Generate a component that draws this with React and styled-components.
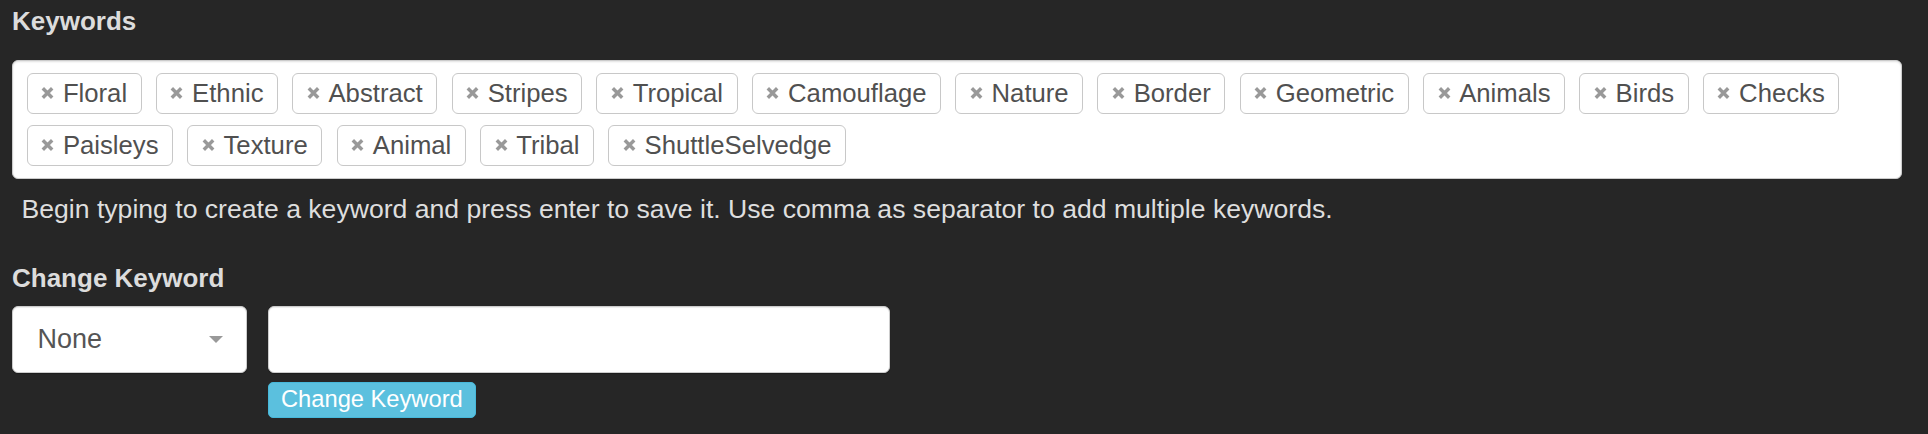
import React, { useState } from 'react';
import styled, { createGlobalStyle } from 'styled-components';

const GlobalStyle = createGlobalStyle`
  html, body {
    margin: 0;
    background: #262626;
  }
  body {
    font-family: "Liberation Sans", Arial, Helvetica, sans-serif;
  }
`;

const initialKeywords = [
  'Floral', 'Ethnic', 'Abstract', 'Stripes', 'Tropical', 'Camouflage',
  'Nature', 'Border', 'Geometric', 'Animals', 'Birds', 'Checks',
  'Paisleys', 'Texture', 'Animal', 'Tribal', 'ShuttleSelvedge',
];

function App() {
  const [keywords, setKeywords] = useState(initialKeywords);
  const [value, setValue] = useState('');

  const removeKeyword = word => {
    setKeywords(keywords.filter(k => k !== word));
  };

  return (
    <Page>
      <GlobalStyle />
      <Label>Keywords</Label>
      <TagBox>
        {keywords.map(word => (
          <Tag key={word}>
            <RemoveIcon onClick={() => removeKeyword(word)} />
            {word}
          </Tag>
        ))}
      </TagBox>
      <HelpText>
        Begin typing to create a keyword and press enter to save it. Use comma as separator to add multiple keywords.
      </HelpText>

      <Label spaced>Change Keyword</Label>
      <ChangeRow>
        <Select>
          None
          <Caret />
        </Select>
        <InputColumn>
          <TextInput value={value} onChange={e => setValue(e.target.value)} />
          <InfoButton>Change Keyword</InfoButton>
        </InputColumn>
      </ChangeRow>
    </Page>
  );
}

export default App;

const RemoveIcon = props => (
  <Icon viewBox="0 0 13 12" width="13" height="12" {...props}>
    <path d="M1.8 1.2 L11.2 10.8 M11.2 1.2 L1.8 10.8" stroke="#999" strokeWidth="3.4" fill="none" />
  </Icon>
);

const Page = styled.div`
  padding: 6px 26px 16px 12px;
`;

const Label = styled.div`
  font-size: 26px;
  font-weight: bold;
  line-height: 30px;
  color: #dcdcdc;
  margin-top: ${p => (p.spaced ? '39px' : '0')};
`;

const TagBox = styled.div`
  box-sizing: border-box;
  margin-top: 24px;
  display: flex;
  flex-wrap: wrap;
  gap: 11.2px 14.3px;
  padding: 11.5px 13px 12.5px 13.7px;
  background: #fff;
  border: 1px solid #ccc;
  border-radius: 6px;
  box-shadow: inset 0 1px 2px rgba(0, 0, 0, 0.12);
`;

const Tag = styled.span`
  box-sizing: border-box;
  display: inline-flex;
  align-items: center;
  height: 41px;
  padding: 0 13.5px 0 13.5px;
  border: 1px solid #c8c8c8;
  border-radius: 6px;
  font-size: 25.7px;
  color: #505050;
  white-space: nowrap;
`;

const Icon = styled.svg`
  margin-right: 8.7px;
  cursor: pointer;
  flex: none;
`;

const HelpText = styled.div`
  margin-top: 14.5px;
  padding-left: 9.5px;
  font-size: 26.6px;
  line-height: 30px;
  color: #dedede;
`;

const ChangeRow = styled.div`
  display: flex;
  align-items: flex-start;
  gap: 21px;
  margin-top: 13.6px;
`;

const Field = styled.div`
  box-sizing: border-box;
  height: 67px;
  background: #fff;
  border: 1px solid #ccc;
  border-radius: 6px;
  box-shadow: inset 0 1px 1px rgba(0, 0, 0, 0.075), 0 1px 1px rgba(0, 0, 0, 0.25);
`;

const Select = styled(Field)`
  width: 235px;
  display: flex;
  align-items: center;
  justify-content: space-between;
  padding: 0 23.5px 0 24.5px;
  font-size: 27px;
  color: #555;
`;

const Caret = styled.span`
  width: 0;
  height: 0;
  border-left: 7.5px solid transparent;
  border-right: 7.5px solid transparent;
  border-top: 7.5px solid #999;
`;

const InputColumn = styled.div`
  display: flex;
  flex-direction: column;
  align-items: flex-start;
  gap: 9px;
`;

const TextInput = styled(Field).attrs({ as: 'input', type: 'text' })`
  width: 622px;
  padding: 0 20px;
  font-size: 26px;
  font-family: inherit;
  color: #555;
  outline: none;
`;

const InfoButton = styled.button`
  box-sizing: border-box;
  height: 36px;
  padding: 0 12px;
  background: #5bc0de;
  border: 1px solid #46b8da;
  border-radius: 5px;
  color: #fff;
  font-family: inherit;
  font-size: 23.7px;
  line-height: 1;
  cursor: pointer;
`;
